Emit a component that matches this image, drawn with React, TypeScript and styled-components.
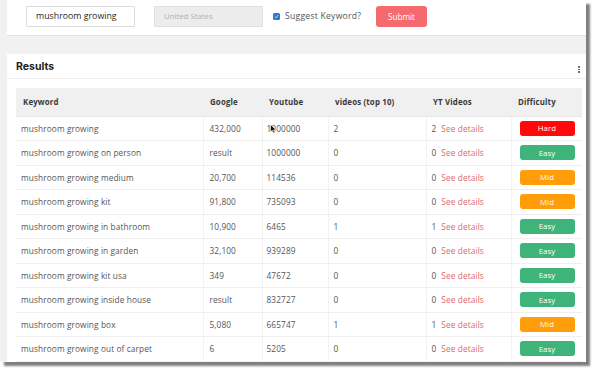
import React from "react";
import styled, { createGlobalStyle } from "styled-components";

const Global = createGlobalStyle`
  html, body { margin: 0; padding: 0; background: #ffffff; }
  body { font-family: "Open Sans", "Noto Sans", sans-serif; }
  * { box-sizing: border-box; }
`;

const Stage = styled.div`
  width: 600px;
  height: 378px;
  background: #ffffff;
  overflow: hidden;
`;

const Window = styled.div`
  width: 586px;
  height: 362px;
  background: #f1f1f1;
  overflow: hidden;
  box-shadow: 4px 4px 2px rgba(0, 0, 0, 0.5);
  display: flex;
  flex-direction: column;
  padding-left: 7px;
`;

const TopCard = styled.div`
  height: 36px;
  flex: none;
  background: #ffffff;
  border-bottom: 1px solid #e2e2e2;
  display: flex;
  align-items: center;
  padding: 0 0 3px 19px;
`;

const TextInput = styled.div<{ $disabled?: boolean }>`
  width: 109px;
  height: 21px;
  border: 1px solid ${(p) => (p.$disabled ? "#e0e0e0" : "#dcdcdc")};
  background: ${(p) => (p.$disabled ? "#ececec" : "#ffffff")};
  color: ${(p) => (p.$disabled ? "#b0b0b0" : "#2a2a2a")};
  font-size: ${(p) => (p.$disabled ? "7.8px" : "8.8px")};
  display: flex;
  align-items: center;
  padding-left: 9px;
  margin-right: ${(p) => (p.$disabled ? "10px" : "19px")};
  border-radius: 1px;
`;

const Check = styled.span`
  width: 7px;
  height: 7px;
  background: #2a7ad8;
  border-radius: 1.5px;
  margin-right: 5px;
  display: inline-flex;
  align-items: center;
  justify-content: center;
`;

const CheckLabel = styled.span`
  font-size: 8.6px;
  letter-spacing: 0.25px;
  color: #555;
  width: 82px;
  margin-right: 9px;
  white-space: nowrap;
`;

const SubmitBtn = styled.div`
  width: 51px;
  height: 21px;
  background: #f56a6e;
  color: #ffffff;
  font-size: 8.2px;
  border-radius: 3px;
  display: flex;
  align-items: center;
  justify-content: center;
`;

const ResultsCard = styled.div`
  margin-top: 18px;
  background: #ffffff;
  flex: 1;
  display: flex;
  flex-direction: column;
`;

const CardHeader = styled.div`
  height: 25px;
  border-bottom: 1px solid #ececec;
  display: flex;
  align-items: center;
  justify-content: space-between;
  padding: 0 6px 0 9px;
`;

const Title = styled.h2`
  margin: 0;
  font-family: "Inter", "Liberation Sans", sans-serif;
  font-size: 10.5px;
  font-weight: 700;
  color: #1e1e1e;
`;

const Kebab = styled.div`
  display: flex;
  flex-direction: column;
  gap: 1px;
  margin-top: 7px;
  span {
    width: 1.6px;
    height: 1.6px;
    background: #555;
    border-radius: 50%;
  }
`;

const TableWrap = styled.div`
  padding: 9px 4px 0 9px;
  position: relative;
`;

const Table = styled.table`
  border-collapse: collapse;
  table-layout: fixed;
  width: 566px;
  font-size: 8.3px;
  letter-spacing: 0.1px;
  color: #555;
`;

const Th = styled.th<{ $w: number }>`
  width: ${(p) => p.$w}px;
  height: 28px;
  background: #f0f0f0;
  text-align: left;
  font-weight: 700;
  font-size: 7.9px;
  letter-spacing: 0.15px;
  color: #3a3a3a;
  padding: 0 0 0 7px;
  border-bottom: 1px solid #e6e6e6;
`;

const Tr = styled.tr`
  height: 24.5px;
`;

const Td = styled.td<{ $pl?: number }>`
  padding: 0 0 0 ${(p) => p.$pl ?? 5}px;
  border-bottom: 1px solid #efefef;
  border-left: 1px solid #f2f2f2;
  white-space: nowrap;
  overflow: hidden;
  &:first-child { border-left: none; }
`;

const Link = styled.span`
  color: #e0676c;
  margin-left: 5px;
`;

const Badge = styled.span<{ $level: "Hard" | "Easy" | "Mid" }>`
  display: flex;
  align-items: center;
  justify-content: center;
  width: 55px;
  height: 15px;
  border-radius: 3px;
  color: #ffffff;
  font-size: 7.8px;
  background: ${(p) =>
    p.$level === "Hard" ? "#ff0a0a" : p.$level === "Mid" ? "#ff9d0a" : "#3eb37a"};
`;

const Cursor = styled.svg`
  position: absolute;
  left: 263px;
  top: 45px;
`;

type Row = [string, string, string, string, string, "Hard" | "Easy" | "Mid"];

const rows: Row[] = [
  ["mushroom growing", "432,000", "1000000", "2", "2", "Hard"],
  ["mushroom growing on person", "result", "1000000", "0", "0", "Easy"],
  ["mushroom growing medium", "20,700", "114536", "0", "0", "Mid"],
  ["mushroom growing kit", "91,800", "735093", "0", "0", "Mid"],
  ["mushroom growing in bathroom", "10,900", "6465", "1", "1", "Easy"],
  ["mushroom growing in garden", "32,100", "939289", "0", "0", "Easy"],
  ["mushroom growing kit usa", "349", "47672", "0", "0", "Easy"],
  ["mushroom growing inside house", "result", "832727", "0", "0", "Easy"],
  ["mushroom growing box", "5,080", "665747", "1", "1", "Mid"],
  ["mushroom growing out of carpet", "6", "5205", "0", "0", "Easy"],
];

export default function App() {
  return (
    <Stage>
      <Global />
      <Window>
        <TopCard>
          <TextInput>mushroom growing</TextInput>
          <TextInput $disabled>United States</TextInput>
          <Check>
            <svg width="5" height="5" viewBox="0 0 10 10">
              <path d="M2 5.5 L4 7.5 L8 2.5" stroke="#fff" strokeWidth="1.6" fill="none" />
            </svg>
          </Check>
          <CheckLabel>Suggest Keyword?</CheckLabel>
          <SubmitBtn>Submit</SubmitBtn>
        </TopCard>
        <ResultsCard>
          <CardHeader>
            <Title>Results</Title>
            <Kebab>
              <span />
              <span />
              <span />
            </Kebab>
          </CardHeader>
          <TableWrap>
            <Table>
              <thead>
                <tr>
                  <Th $w={187}>Keyword</Th>
                  <Th $w={59}>Google</Th>
                  <Th $w={66}>Youtube</Th>
                  <Th $w={98}>videos (top 10)</Th>
                  <Th $w={85}>YT Videos</Th>
                  <Th $w={71}>Difficulty</Th>
                </tr>
              </thead>
              <tbody>
                {rows.map((r, i) => (
                  <Tr key={i}>
                    <Td>{r[0]}</Td>
                    <Td $pl={6}>{r[1]}</Td>
                    <Td $pl={4}>{r[2]}</Td>
                    <Td>{r[3]}</Td>
                    <Td>
                      {r[4]}
                      <Link>See details</Link>
                    </Td>
                    <Td $pl={8}>
                      <Badge $level={r[5]}>{r[5]}</Badge>
                    </Td>
                  </Tr>
                ))}
              </tbody>
            </Table>
            <Cursor width="7" height="10" viewBox="0 0 7 10">
              <path d="M0.5 0.5 L0.5 8 L2.3 6.3 L3.6 9.2 L4.8 8.7 L3.6 5.9 L6 5.9 Z" fill="#111" stroke="#fff" strokeWidth="0.6" />
            </Cursor>
          </TableWrap>
        </ResultsCard>
      </Window>
    </Stage>
  );
}
